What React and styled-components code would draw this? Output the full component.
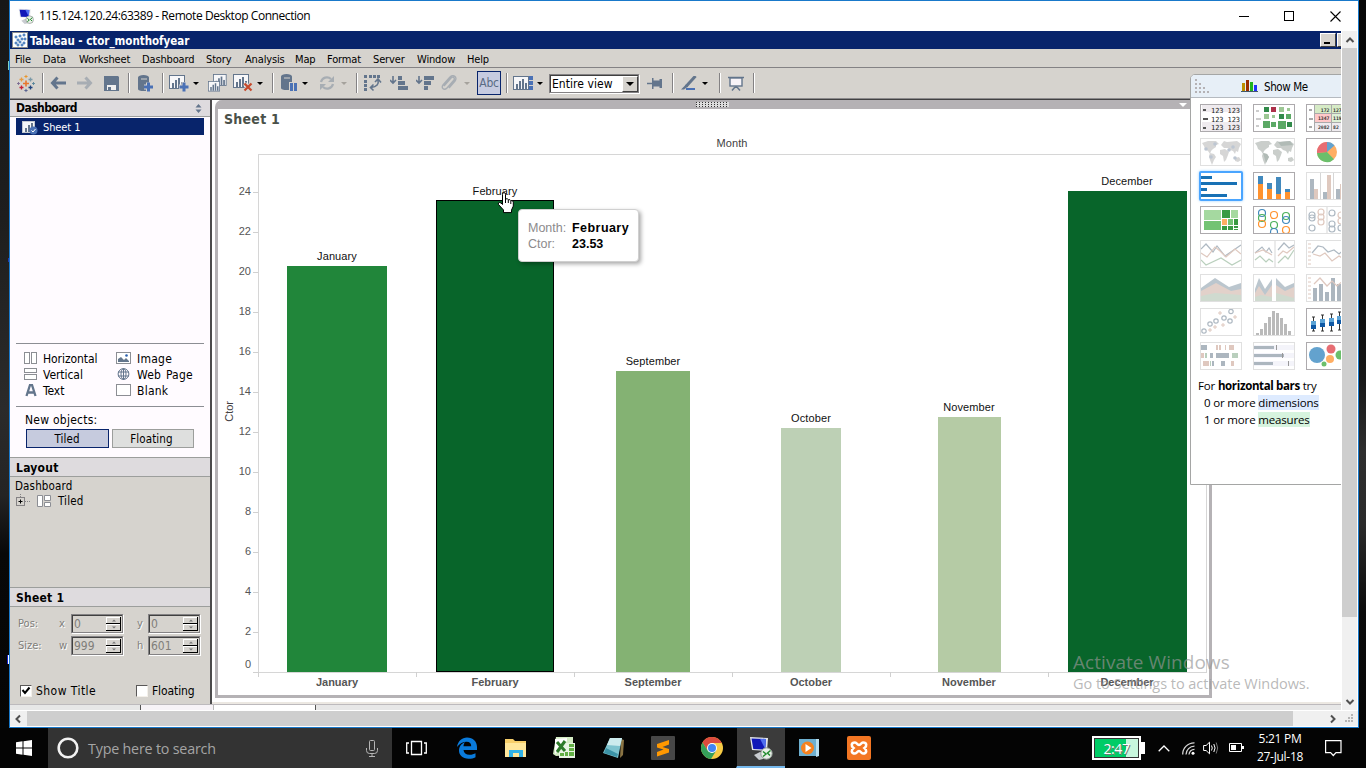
import React from "react";
import styled, { createGlobalStyle, css } from "styled-components";

const ui = '"DejaVu Sans Condensed", "DejaVu Sans", sans-serif';
const segoe = '"Open Sans", "Noto Sans", sans-serif';
const arial = '"Liberation Sans", Arial, sans-serif';

const c = {
  face: "#d6d3ce",
  navy: "#08246b",
  blue: "#1979ca",
  slate: "#63758c",
  steel: "#4a71b5",
  pale: "#fffbff",
  head: "#dedbde",
  line: "#8c8e94",
};

const Global = createGlobalStyle`
  * { box-sizing: border-box; }
  body { margin: 0; overflow: hidden; background: #000; }
  svg { display: block; flex: none; }
`;

/* ---------- desktop and remote window ---------- */
const Desktop = styled.div`
  position: relative;
  width: 1366px;
  height: 768px;
  display: flex;
  flex-direction: column;
  overflow: hidden;
  background: #060606;
  font: 11px/14px ${ui};
  color: #000;
  white-space: nowrap;
`;
const Upper = styled.div`
  display: flex;
  height: 728px;
`;
const Wallpaper = styled.div`
  width: ${(p) => p.$w}px;
  background: ${(p) =>
    p.$left
      ? "linear-gradient(#7fd1c4,#7fd1c4) 8px 61px/1px 9px no-repeat, linear-gradient(#2038b0,#2038b0) 8px 258px/1px 4px no-repeat, linear-gradient(90deg,#1523c8 1px,#fff 1px) 7px 655px/2px 9px no-repeat, linear-gradient(#171717,#1e1e1e 30%,#2b2b2b 56%,#242424 68%,#080808 76%,#050505)"
      : "linear-gradient(#070707,#0a0a0a 40%,#171717 52%,#2e2e2e 62%,#2b2b2b 72%,#0b0b0b 84%,#050505)"};
`;
const RemoteWindow = styled.div`
  width: 1350px;
  border: 1px solid ${c.blue};
  background: #fff;
  display: flex;
  flex-direction: column;
`;
const RemoteTitle = styled.div`
  height: 30px;
  display: flex;
  align-items: center;
  padding-left: 8px;
  font: 12px/16px ${segoe};
  letter-spacing: -0.44px;
  & > span { margin-left: 5px; flex: 1; }
`;
const WindowGlyph = styled.svg`
  margin-right: ${(p) => p.$mr}px;
`;
const RemoteBody = styled.div`
  display: flex;
  height: 679px;
`;
const Client = styled.div`
  width: 1331px;
  position: relative;
  display: flex;
  flex-direction: column;
  overflow: hidden;
`;
const VScroll = styled.div`
  width: 17px;
  height: 696px;
  padding: 0 1px;
  display: flex;
  flex-direction: column;
  background: #fff;
`;
const ScrollEnd = styled.div`
  width: ${(p) => p.$w}px;
  height: ${(p) => p.$h}px;
  background: #f0f0f0;
  display: flex;
  align-items: center;
  justify-content: center;
  flex: ${(p) => (p.$grow ? 1 : "none")};
  ${(p) => p.$toEnd && css`align-items: flex-end; padding-bottom: 20px;`}
  ${(p) => p.$toRight && css`justify-content: flex-end; padding-right: 3px;`}
`;
const VThumb = styled.div`
  height: 569px;
  background: #cecece;
`;
const HScroll = styled.div`
  height: 17px;
  padding: 1px 0;
  display: flex;
  background: #fff;
`;
const HThumb = styled.div`
  width: 1266px;
  background: #cecece;
`;

/* ---------- application chrome ---------- */
const AppTitle = styled.div`
  height: 18px;
  background: ${c.navy};
  color: #fff;
  display: flex;
  align-items: center;
  padding: 0 0 0 2px;
  font-weight: bold;
  font-size: 11.5px;
  & > span { margin-left: 2px; flex: 1; letter-spacing: -0.02px; padding-top: 1px; }
`;
const CaptionButton = styled.div`
  width: ${(p) => p.$w}px;
  height: 14px;
  background: ${c.face};
  border: 1px solid #fff;
  border-right: ${(p) => (p.$w > 4 ? "1px solid #404040" : 0)};
  border-bottom-color: #404040;
  margin-left: ${(p) => (p.$w > 4 ? 0 : 1)}px;
  padding: 8px 0 0 3px;
  &::after {
    content: "";
    display: ${(p) => (p.$w > 4 ? "block" : "none")};
    width: 6px;
    height: 2px;
    background: #000;
  }
`;
const MenuBar = styled.div`
  height: 19px;
  background: ${c.face};
  border-bottom: 1px solid #848284;
  display: flex;
  align-items: center;
  padding: 3px 0 0 5px;
`;
const MenuItem = styled.span`
  width: ${(p) => p.$w}px;
  letter-spacing: -0.15px;
`;
const Toolbar = styled.div`
  height: 32px;
  background: ${c.face};
  border-bottom: 1px solid #424142;
  box-shadow: inset 0 -1px #8c8a8c;
  padding-bottom: 1px;
  display: flex;
  align-items: center;
`;
const Tool = styled.svg`
  margin-left: ${(p) => p.$ml}px;
  opacity: ${(p) => (p.$dim ? 0.4 : 1)};
`;
const Divider = styled.div`
  width: 2px;
  height: 20px;
  margin-left: ${(p) => p.$ml}px;
  background: #848284;
  border-right: 1px solid #fff;
`;
const Caret = styled.i`
  margin-left: ${(p) => p.$ml}px;
  border: 3px solid transparent;
  border-top-color: ${(p) => (p.$dim ? "#a5a29c" : "#000")};
  border-bottom: 0;
`;
const AbcButton = styled.div`
  width: 24px;
  height: 24px;
  margin-left: 7px;
  border: 1px solid ${c.navy};
  background: #c6cbe0;
  color: #5a6b84;
  text-align: center;
  font: 12px/22px ${ui};
  letter-spacing: -0.3px;
`;
const ViewSelect = styled.div`
  width: 90px;
  height: 19px;
  margin-left: 6px;
  border: 1px solid #848284;
  box-shadow: inset 1px 1px #404040, 1px 1px #fff;
  background: #fff;
  display: flex;
  justify-content: space-between;
  padding: 1px 0 0 2px;
  font-size: 12px;
  line-height: 17px;
  letter-spacing: 0.05px;
`;
const SelectArrow = styled.div`
  width: 16px;
  height: 16px;
  background: ${c.face};
  border: 1px solid #fff;
  border-right-color: #404040;
  border-bottom-color: #404040;
  display: flex;
  align-items: center;
  justify-content: center;
  & > i {
    border: 4px solid transparent;
    border-top-color: #000;
    border-bottom: 0;
    margin: 0;
  }
`;
const Workspace = styled.div`
  height: 604px;
  display: flex;
`;
const TabStrip = styled.div`
  height: 6px;
  display: flex;
  border-top: 1px solid #bdbabd;
  background: #e7e7e7;
`;
const TabPiece = styled.div`
  width: ${(p) => p.$w}px;
  background: ${(p) => p.$bg};
  border-right: 1px solid ${(p) => p.$edge};
`;

/* ---------- sidebar ---------- */
const Sidebar = styled.div`
  width: 202px;
  background: ${c.face};
  border-right: 2px solid #4c4b4c;
  display: flex;
  flex-direction: column;
`;
const PanelHead = styled.div`
  height: ${(p) => p.$h}px;
  background: ${c.head};
  border: 1px solid #9c9e9c;
  border-width: ${(p) => (p.$first ? 0 : 1)}px 0 1px;
  padding: ${(p) => (p.$first ? 0 : 1)}px 8px 0 6px;
  display: flex;
  align-items: center;
  justify-content: space-between;
  font-weight: bold;
  font-size: 12px;
  letter-spacing: ${(p) => (p.$first ? -0.55 : 0.25)}px;
`;
const SheetList = styled.div`
  height: 226px;
  padding: 1px 6px 0;
  background: ${c.pale};
`;
const SheetRow = styled.div`
  height: 17px;
  background: ${c.navy};
  color: #fff;
  display: flex;
  align-items: center;
  padding-left: 6px;
  gap: 4px;
  padding-top: 2px;
  letter-spacing: -0.1px;
`;
const ObjectArea = styled.div`
  height: 114px;
  background: ${c.pale};
  padding: 0 6px;
`;
const ObjectGrid = styled.div`
  height: 64px;
  border: solid ${c.line};
  border-width: 1px 0;
  padding: 6px 0 0 7px;
  display: grid;
  grid-template-columns: 93px 90px;
  grid-auto-rows: 16px;
`;
const ObjectItem = styled.div`
  display: flex;
  align-items: center;
  gap: 5px;
  font-size: 12px;
  letter-spacing: -0.06px;
  word-spacing: 1px;
  & > span { padding: 1px 0 0 ${(p) => (p.$right ? 1 : 0)}px; letter-spacing: ${(p) => (p.$right ? 0.25 : -0.06)}px; }
`;
const NewLabel = styled.div`
  padding: 6px 0 0 9px;
  height: 22px;
  font-size: 12px;
  letter-spacing: 0.25px;
`;
const ToggleRow = styled.div`
  display: flex;
  gap: 3px;
  padding-left: 10px;
`;
const Toggle = styled.div`
  width: ${(p) => (p.$on ? 83 : 82)}px;
  height: 19px;
  border: 1px solid ${(p) => (p.$on ? c.navy : "#9c9e9c")};
  background: ${(p) => (p.$on ? "#c6cbde" : "#dedfde")};
  text-align: center;
  font-size: 11.5px;
  line-height: 18px;
  letter-spacing: 0.1px;
  padding-right: ${(p) => (p.$on ? 1 : 3)}px;
`;
const LayoutTree = styled.div`
  height: 110px;
  padding: 2px 0 0 5px;
  font-size: 11.5px;
  letter-spacing: 0.15px;
`;
const TreeRow = styled.div`
  display: flex;
  align-items: center;
  gap: 5px;
  margin-top: 1px;
  & > span { padding-left: 1px; }
`;
const Props = styled.div`
  padding: 5px 0 0 8px;
`;
const PropRow = styled.div`
  display: flex;
  align-items: center;
  height: 22px;
  color: #807e7a;
  text-shadow: 1px 1px #fff;
`;
const PropLabel = styled.span`
  width: ${(p) => p.$w}px;
  padding-left: ${(p) => p.$pl || 0}px;
  padding-top: 1px;
`;
const Spin = styled.div`
  width: 52px;
  height: 19px;
  border: 1px solid #848284;
  box-shadow: inset 1px 1px #404040, 1px 1px #fff;
  display: flex;
  justify-content: space-between;
  padding: 2px 1px 1px 2px;
  font-size: 12px;
  line-height: 15px;
  text-shadow: none;
`;
const CheckRow = styled.div`
  display: flex;
  align-items: center;
  margin-top: 28px;
  padding-left: 2px;
  font-size: 12px;
`;
const Check = styled.div`
  width: 12px;
  height: 12px;
  border: 1px solid #5a5858;
  border-right-color: #f4f0ea;
  border-bottom-color: #f4f0ea;
  background: #fff;
`;
const CheckText = styled.span`
  width: ${(p) => p.$w}px;
  padding-left: 4px;
  letter-spacing: ${(p) => p.$ls}px;
`;

/* ---------- chart ---------- */
const Stage = styled.div`
  flex: 1;
  background: #fff;
  border-bottom: 2px solid #ece8e2;
  padding-left: 3px;
`;
const SheetFrame = styled.div`
  width: 997px;
  height: 598px;
  border: 3px solid #b5b2b5;
  border-top: 0;
  border-radius: 7px 7px 0 0;
`;
const FrameGrip = styled.div`
  height: 9px;
  background: #b5b2b5;
  border-radius: 4px 0 0 0;
  display: flex;
  align-items: center;
  padding-left: 478px;
  & > i {
    margin-left: 450px;
    border: 4px solid transparent;
    border-top-color: #fff;
    border-bottom: 0;
  }
`;
const Grip = styled.div`
  width: 33px;
  height: 5px;
  background:
    conic-gradient(from 0deg at 1px 1px, transparent 75%, #333 0) 0 0/3px 2px,
    #ddd;
`;
const SheetTitle = styled.div`
  height: 22px;
  padding: 2px 0 0 6px;
  font: bold 14px/16px ${ui};
  letter-spacing: 0.25px;
  color: #4a514a;
`;
const ColumnTitle = styled.div`
  height: 23px;
  padding: 5px 0 0 40px;
  width: 988px;
  text-align: center;
  font: 11px/14px ${arial};
  letter-spacing: 0.1px;
  color: #424142;
`;
const PlotRow = styled.div`
  display: flex;
  height: 518px;
`;
const AxisTitle = styled.div`
  width: 16px;
  padding-left: 4px;
  display: flex;
  align-items: center;
  & > span {
    writing-mode: vertical-rl;
    transform: rotate(180deg);
    font: 11px/14px ${arial};
    color: #424142;
    margin-top: -4px;
  }
`;
const AxisScale = styled.div`
  width: 24px;
  padding-top: 18px;
  display: flex;
  flex-direction: column;
`;
const Tick = styled.div`
  height: 40px;
  flex: none;
  display: flex;
  justify-content: flex-end;
  gap: 2px;
  font: 11px/14px ${arial};
  color: #555;
  & > span { margin-top: ${(p) => (p.$zero ? 5 : 12)}px; }
  &::after {
    content: "";
    width: 5px;
    height: 1px;
    margin-top: 20px;
    background: #d0d0d0;
  }
`;
const Plot = styled.div`
  width: 949px;
  box-shadow: inset 0 0 0 1px #d6d6d6;
  padding-bottom: 1px;
  display: flex;
  height: 519px;
`;
const BarCell = styled.div`
  width: 158px;
  flex: none;
  display: flex;
  flex-direction: column;
  justify-content: flex-end;
  align-items: center;
  font: 11px/14px ${arial};
  letter-spacing: 0.1px;
  color: #111;
`;
const Bar = styled.div`
  margin-top: ${(p) => (p.$hot ? 2 : 3)}px;
  flex: none;
  background: ${(p) => p.$fill};
  border: ${(p) => (p.$hot ? "1px solid #000" : 0)};
`;
const Categories = styled.div`
  display: flex;
  padding-left: 40px;
`;
const Category = styled.div`
  width: 158px;
  height: 22px;
  text-align: center;
  font: bold 11px/21px ${arial};
  color: #555;
  background: linear-gradient(#d0d0d0, #d0d0d0) 0 0/1px 5px no-repeat;
`;
const Tooltip = styled.div`
  position: absolute;
  left: 508px;
  top: 178px;
  width: 121px;
  height: 53px;
  border: 1px solid #d0d0d0;
  border-radius: 4px;
  background: #fff;
  box-shadow: 2px 2px 4px rgba(0, 0, 0, 0.35);
  padding: 10px 0 0 9px;
  display: grid;
  grid-template-columns: 44px auto;
  grid-auto-rows: 16px;
  font: 12.5px/16px ${arial};
  color: #8c8a8c;
  & > b { color: #000; }
  & > b:nth-of-type(1) { letter-spacing: 0.45px; }
`;
const Pointer = styled.svg`
  position: absolute;
  left: 487px;
  top: 161px;
`;

/* ---------- show me ---------- */
const ShowMe = styled.div`
  position: absolute;
  left: 1180px;
  top: 43px;
  width: 170px;
  height: 411px;
  border: 1px solid #a5a6a5;
  border-radius: 5px 0 0 0;
  background: #fff;
  overflow: hidden;
`;
const ShowMeHead = styled.div`
  height: 23px;
  background: #e7eff7;
  border-bottom: 1px solid #b5bac0;
  display: flex;
  align-items: center;
  padding-left: 4px;
  font-size: 11.5px;
  & > span { margin-left: 6px; letter-spacing: -0.4px; padding-top: 2px;}
`;
const ThumbGrid = styled.div`
  display: grid;
  grid-template-columns: repeat(3, 42px);
  gap: 6px 11px;
  padding: 6px 0 0 9px;
`;
const Thumb = styled.div`
  width: 42px;
  height: 28px;
  border: 1px solid ${(p) => (p.$dim ? "#e0e0e0" : "#adaaad")};
  background: #fff;
  overflow: hidden;
  & > svg { opacity: ${(p) => (p.$dim ? 0.4 : 1)}; }
  ${(p) =>
    p.$on &&
    css`
      border: 2px solid #4aa5ff;
      border-radius: 2px;
      width: 44px;
      height: 30px;
      margin: -1px;
      box-shadow: 0 0 3px #9cd0ff;
    `}
`;
const Hint = styled.div`
  padding: 7px 0 0 7px;
  font: 11.5px/17px ${segoe};
  letter-spacing: -0.16px;
  & > div { padding-left: 6px; }
  & b { letter-spacing: -0.36px; }
`;
const Pill = styled.span`
  background: ${(p) => p.$bg};
`;
const Watermark = styled.div`
  position: absolute;
  left: 1073px;
  top: 651px;
  color: rgba(150, 150, 150, 0.68);
  font: 14.5px/20px ${segoe};
  letter-spacing: -0.03px;
  & > div:first-child { font-size: 19px; line-height: 23px; letter-spacing: 0.05px; }
`;

/* ---------- taskbar ---------- */
const Taskbar = styled.div`
  height: 40px;
  display: flex;
  background: #040404;
  color: #fff;
`;
const Start = styled.div`
  width: 48px;
  display: flex;
  align-items: center;
  justify-content: center;
`;
const Search = styled.div`
  width: 344px;
  background: #333;
  display: flex;
  align-items: center;
  padding: 0 14px 0 9px;
  color: #a5a5a5;
  font: 14.3px/20px ${segoe};
  letter-spacing: -0.2px;
  & > span { margin-left: 9px; flex: 1; padding-top: 1px; }
`;
const Task = styled.div`
  width: ${(p) => p.$w || 49}px;
  display: flex;
  align-items: center;
  justify-content: center;
  padding-right: ${(p) => p.$pr || 0}px;
  ${(p) =>
    p.$on &&
    css`
      background: #3b3b3b;
      border-bottom: 2px solid #76b9ed;
      border-left: 1px solid #040404;
      padding-top: 2px;
    `}
`;
const Tray = styled.div`
  flex: 1;
  display: flex;
  align-items: center;
  justify-content: flex-end;
  padding-right: 24px;
`;
const TrayIcon = styled.svg`
  margin-right: ${(p) => p.$mr}px;
`;
const BatteryGauge = styled.div`
  width: 49px;
  height: 24px;
  border: 2px solid #fff;
  outline: 1px solid #333;
  outline-offset: -3px;
  background: linear-gradient(90deg, #0c6 32px, #c8f7dd 32px);
  color: #fff;
  font: 14px/21px ${segoe};
  text-align: center;
  letter-spacing: -0.4px;
  text-shadow: 1px 1px #777;
`;
const BatteryNub = styled.div`
  width: 4px;
  height: 12px;
  background: #fff;
  margin-right: 13px;
`;
const Clock = styled.div`
  width: 54px;
  text-align: center;
  font: 12px/18px ${segoe};
  letter-spacing: -0.3px;
  margin-right: 18px;
`;

/* ---------- data ---------- */
const bars = [
  { m: "January", w: 100, h: 406, fill: "#21863a" },
  { m: "February", w: 118, h: 472, fill: "#08652a", hot: true },
  { m: "September", w: 74, h: 301, fill: "#84b273" },
  { m: "October", w: 60, h: 244, fill: "#bdd0b5" },
  { m: "November", w: 63, h: 255, fill: "#b5cba5" },
  { m: "December", w: 119, h: 481, fill: "#08652a" },
];
const ticks = [24, 22, 20, 18, 16, 14, 12, 10, 8, 6, 4, 2];
const menus = [
  ["File", 28], ["Data", 36], ["Worksheet", 63], ["Dashboard", 64], ["Story", 39], ["Analysis", 50],
  ["Map", 32], ["Format", 46], ["Server", 44], ["Window", 50], ["Help", 40],
];

/* ---------- icons ---------- */
const R = ({ d, f = c.slate }) =>
  d.map(([x, y, w, h, fill], i) => <rect key={i} x={x} y={y} width={w} height={h} fill={fill || f} />);
const Circles = ({ d, r = 3.5 }) =>
  d.map(([x, y, s], i) => <circle key={i} cx={x} cy={y} r={r} fill="none" stroke={s} strokeWidth="1.2" />);
const Line = ({ p, s, w = 1.2 }) => <polyline points={p} fill="none" stroke={s} strokeWidth={w} />;
const Plus = ({ x, y, r = 2, s, w = 1 }) => (
  <path d={`M${x - r} ${y}h${2 * r}M${x} ${y - r}v${2 * r}`} stroke={s} strokeWidth={w} fill="none" />
);

const RemoteIcon = ({ size }) => (
  <svg width={size} height={size} viewBox="0 0 24 24">
    <path d="M5 19l6-3 6 1 1 5-8 2z" fill="#c9ccd0" />
    <path d="M1 1l18 1-1 13L3 14z" fill="#e3e6ea" />
    <path d="M2.500 2.500L17 3l-.800 10.500L4.300 13z" fill="#1018b8" />
    <path d="M11 2.800l6 .2-.800 10z" fill="#4f6ff0" />
    <circle cx="17.500" cy="17.500" r="5.700" fill="#e9efe8" stroke="#8c9690" />
    <path d="M14 15.500l3 2.500-3 2.500M21.500 14.500l-3 2.500 2.500 2.500" stroke="#208a2c" strokeWidth="1.500" fill="none" />
  </svg>
);
const SheetIcon = () => (
  <svg width="17" height="14">
    <rect x=".5" y=".5" width="12" height="11" fill="#f4f6f8" stroke="#c2c8d0" />
    <R d={[[3, 7, 2, 4], [6, 4, 2, 7], [9, 2, 2, 9]]} />
    <circle cx="11.500" cy="9.500" r="4" fill={c.steel} />
    <path d="M9.500 9.500l1.500 1.500 2.500-3" stroke="#fff" fill="none" />
  </svg>
);
const LogoIcon = () => (
  <Tool $ml={7} width="18" height="19">
    <Plus x={9} y={9.5} r={3} s="#e8762c" w={1.6} />
    <Plus x={4.500} y={5.500} r={2} s="#e89b41" w={1.3} />
    <Plus x={13.500} y={5.500} r={2} s="#7b9aa8" w={1.3} />
    <Plus x={4.500} y={13.500} r={2} s="#c72035" w={1.3} />
    <Plus x={13.500} y={13.500} r={2} s="#1f447e" w={1.3} />
    <Plus x={9} y={2.500} r={1.6} s="#e8962c" />
    <Plus x={9} y={16.500} r={1.6} s="#5b6591" />
    <Plus x={1.500} y={9.500} r={1.400} s="#7c6c92" />
    <Plus x={16.500} y={9.500} r={1.400} s="#59879b" />
  </Tool>
);
const Cylinder = () => (
  <path d="M0 2.500C0 1 2.500 0 5.500 0S11 1 11 2.500V14c0 1.500-2.500 2-5.500 2S0 15.500 0 14zM0 4.500h4" fill={c.slate} />
);
const MiniChart = ({ x = 0, y = 0 }) => (
  <g transform={`translate(${x} ${y})`}>
    <rect x=".5" y=".5" width="15" height="13" fill="#f7f7f9" stroke={c.slate} />
    <R d={[[3, 8, 2, 5], [6, 5, 2, 8], [9, 3, 2, 10], [12, 7, 2, 6]]} />
  </g>
);

const AppToolbar = () => (
  <Toolbar>
    <LogoIcon />
    <Divider $ml={7} />
    <Tool $ml={6} width="16" height="14"><path d="M2 7h14M7.500 1.500L2.500 7l5 5.500" stroke={c.slate} strokeWidth="3" fill="none" /></Tool>
    <Tool $ml={11} $dim width="16" height="14"><path d="M0 7h14M8.500 1.500l5 5.500-5 5.500" stroke={c.slate} strokeWidth="3" fill="none" /></Tool>
    <Tool $ml={11} width="15" height="15"><path d="M0 0h14l1 1v14H0z" fill={c.slate} /><R d={[[3, 9, 9, 5, "#f0f0f0"], [4, 11, 3, 3]]} /></Tool>
    <Divider $ml={9} />
    <Tool $ml={8} width="16" height="17">
      <Cylinder /><path d="M3 4h6" stroke={c.face} />
      <path d="M6 12h9M10.500 7.500v9" stroke={c.face} strokeWidth="5" /><path d="M6 12h9M10.500 7.500v9" stroke={c.steel} strokeWidth="3" />
    </Tool>
    <Divider $ml={8} />
    <Tool $ml={5} width="21" height="17">
      <MiniChart />
      <path d="M10 12h10M15 7v10" stroke={c.face} strokeWidth="5" /><path d="M10.500 12h9M15 7.500v9" stroke={c.steel} strokeWidth="3" />
    </Tool>
    <Caret $ml={3} />
    <Tool $ml={9} width="19" height="18">
      <g transform="translate(5 0) scale(.85)"><MiniChart /></g>
      <g transform="translate(0 7) scale(.75)"><MiniChart /></g>
    </Tool>
    <Tool $ml={6} width="20" height="18">
      <MiniChart /><path d="M11.500 9.500l7 7M18.500 9.500l-7 7" stroke={c.face} strokeWidth="4" />
      <path d="M11.500 9.500l7 7M18.500 9.500l-7 7" stroke="#c6492c" strokeWidth="2.200" />
    </Tool>
    <Caret $ml={4} />
    <Divider $ml={9} />
    <Tool $ml={7} width="17" height="18"><Cylinder /><path d="M3 4h6" stroke={c.face} /><R f={c.steel} d={[[8, 8, 9, 10, c.face], [9, 9, 3, 8], [13, 9, 3, 8]]} /></Tool>
    <Caret $ml={4} />
    <Tool $ml={11} $dim width="16" height="14">
      <path d="M2 6a6 6 0 0 1 10-3M14 8a6 6 0 0 1-10 3" stroke={c.slate} strokeWidth="2.200" fill="none" /><path d="M15 0v6H9zM1 14V8h6z" fill={c.slate} />
    </Tool>
    <Caret $ml={6} $dim />
    <Divider $ml={9} />
    <Tool $ml={6} width="18" height="17">
      <R d={[[0, 0, 3, 3], [5, 0, 3, 3], [9, 0, 3, 3], [13, 0, 3, 3], [0, 5, 3, 3], [0, 9, 3, 3], [0, 13, 3, 3]]} />
      <path d="M14 5c1 4-1 7-7 7.500M11 7l3-3 3 3.500M9.500 9.500L6.500 12.500l3 3" stroke={c.slate} strokeWidth="1.600" fill="none" />
    </Tool>
    <Tool $ml={8} width="18" height="15">
      <path d="M3 0v6M0 4l3 3 3-3" stroke={c.slate} strokeWidth="1.600" fill="none" /><R d={[[8, 0, 4, 4], [8, 5, 7, 4], [8, 10, 10, 4]]} />
    </Tool>
    <Tool $ml={8} width="18" height="15">
      <path d="M3 0v6M0 4l3 3 3-3" stroke={c.slate} strokeWidth="1.600" fill="none" /><R d={[[8, 0, 10, 4], [8, 5, 7, 4], [8, 10, 4, 4]]} />
    </Tool>
    <Tool $ml={7} $dim width="17" height="16">
      <path d="M3 11l7-8c2-2 4 0 3 2l-7 8c-3 3-6 0-4-3l7-8c3-3 8 0 5 4l-6 7" stroke={c.slate} strokeWidth="1.400" fill="none" />
    </Tool>
    <Caret $ml={6} $dim />
    <AbcButton>Abc</AbcButton>
    <Divider $ml={5} />
    <Tool $ml={5} width="20" height="14"><MiniChart /><R f={c.steel} d={[[16, 0, 4, 4], [16, 5, 4, 4], [16, 10, 4, 4]]} /></Tool>
    <Caret $ml={4} />
    <ViewSelect>Entire view<SelectArrow><i /></SelectArrow></ViewSelect>
    <Tool $ml={8} width="16" height="11"><path d="M0 5.500h6" stroke={c.slate} strokeWidth="1.500" /><path d="M5 0h1.500v2.500h6V1H15v9h-2.500V8.500h-6V11H5z" fill={c.slate} /></Tool>
    <Divider $ml={9} />
    <Tool $ml={7} width="16" height="15"><path d="M14.500 0L5 10.500" stroke={c.slate} strokeWidth="3" fill="none" /><path d="M5 8.500l2 2-4 3H0z" fill={c.slate} /><rect x="5" y="12" width="9" height="2" fill={c.steel} /></Tool>
    <Caret $ml={5} />
    <Divider $ml={11} />
    <Tool $ml={7} width="16" height="15">
      <path d="M0 1.500h16" stroke={c.slate} strokeWidth="1.500" /><rect x="2" y="2" width="12" height="8" fill="#f7f3f7" stroke={c.slate} strokeWidth="1.400" />
      <path d="M8 10v2M4 14.500L7 11M12 14.500L9 11" stroke={c.slate} strokeWidth="1.500" />
    </Tool>
    <Divider $ml={9} />
  </Toolbar>
);

const objectIcons = {
  Horizontal: <><rect x="1.500" y=".5" width="5" height="11" fill="#fff" stroke={c.line} /><rect x="8.500" y=".5" width="5" height="11" fill="#fff" stroke={c.line} /></>,
  Image: <><rect x=".5" y=".5" width="14" height="11" fill="#fff" stroke={c.line} /><path d="M2 10V7l3-2 3 3 2-2 3 3v1z" fill={c.slate} /><circle cx="10.500" cy="3.500" r="1.300" fill="#2c5fae" /></>,
  Vertical: <><rect x="1.500" y=".5" width="12" height="4" fill="#fff" stroke={c.line} /><rect x="1.500" y="6.500" width="12" height="5" fill="#fff" stroke={c.line} /></>,
  "Web Page": <g stroke={c.slate} fill="none"><circle cx="7.500" cy="6" r="5.400" /><ellipse cx="7.500" cy="6" rx="2.500" ry="5.400" /><path d="M2 4h11M2 8h11M7.500 .6v11" /></g>,
  Text: <path d="M3.500 12L7 1h2l3.500 11M5 8.500h6" stroke={c.slate} strokeWidth="2.300" fill="none" />,
  Blank: <rect x=".5" y=".5" width="14" height="11" fill="#fff" stroke={c.line} />,
};

/* thumbnails of the chart types */
const g1 = "#5ba965", g2 = "#318a4a", g3 = "#9cc794";
const bl = "#4289bd", og = "#ff922e", gr = "#4cb15c";
const nv = "#365068", bn = "#b07860", gn = "#538a5c", gy = "#334c62";
const land = "M1 4l6-2 8 0 3 3-3 1 0 2-3 2-2 2-1 3-2-3-3-2-1-3zM9 14l4 1 2 3-2 3-2 5-2-5-1-4zM20 6l3-4 3 1 10-1 4 3-2 4-1 4-2-1-1 3-2-3-3-1-2-2-4 0zM19 11l5-1 4 3-1 3-2 5-2 2-1-6-3-2zM34 19l4-1 2 3-3 2-3-1z";
const Cells = () => (
  <>
    <R d={[[1, 0, 39, 7, "#efebef"], [1, 17, 39, 9, "#efebef"], [2, 4, 3, 2, "#555"], [2, 13, 5, 2, "#555"], [2, 22, 3, 2, "#555"]]} />
    {[7.5, 16.5, 24.5].map((y) => (
      <text key={y} x="10" y={y} fontSize="7" fontFamily="DejaVu Sans Mono" fill="#222" textLength="29">123 123</text>
    ))}
  </>
);
const thumbs = [
  { a: <Cells /> },
  { a: <R d={[[2, 5, 3, 2, "#ccc"], [2, 13, 5, 2, "#ccc"], [2, 20, 3, 2, "#ccc"], [10, 2, 5, 5, g2], [17, 2, 5, 5, "#ad304a"], [25, 2, 5, 5, g3], [33, 3, 3, 3, g3], [10, 9, 5, 5, g3], [18, 10, 3, 3, g3], [25, 9, 5, 5, g2], [32, 9, 5, 5, g1], [9, 16, 7, 7, g1], [17, 17, 5, 5, g1], [24, 16, 8, 8, g1], [33, 17, 5, 5, g2]]} /> },
  { a: <><R d={[[8, 0, 33, 9, "#d6ebc6"], [8, 9, 16, 8, "#ffc8c8"], [25, 9, 16, 8, "#dff0d6"], [8, 17, 33, 9, "#efebef"], [7, 0, 1, 26, "#aaa"], [24, 0, 1, 26, "#aaa"], [8, 8, 33, 1, "#aaa"], [8, 17, 33, 1, "#aaa"], [2, 4, 3, 2, "#aaa"], [2, 13, 4, 2, "#aaa"], [2, 21, 3, 2, "#aaa"]]} />
    {[["172", "127", 6.5], ["1347", "119", 15.2], ["2082", "82", 24]].map(([t, u, y]) => (
      <g key={t} fontSize="4.800" fontWeight="bold" fontFamily="DejaVu Sans Mono" fill="#333">
        <text x="22.500" y={y} textAnchor="end">{t}</text>
        <text x="26" y={y}>{u}</text>
      </g>
    ))}</> },
  { dim: 1, a: <><path d={land} fill="#999" />{[[5, 10], [10, 18], [14, 5], [28, 11], [32, 8], [34, 19]].map(([x, y]) => <circle key={`${x}${y}`} cx={x} cy={y} r="1.800" fill="#5a7090" />)}</> },
  { dim: 1, a: <><path d={land} fill="#7a857e" /><path d="M24 3l12-1 3 4-12 1zM9 14l4 1 2 3-3 6z" fill="#3c554a" /></> },
  { a: <g transform="translate(20 13)"><circle r="10" fill="#ffae63" /><path d="M0 0V-10A10 10 0 0 1 7.500 -6.600z" fill="#63a2ce" /><path d="M0 0L7 7.200A10 10 0 0 1-10 1z" fill="#6bbf6b" /><path d="M0 0L-10 1A10 10 0 0 1 0-10z" fill="#e76d73" /></g> },
  { on: 1, a: <R f="#1871b5" d={[[0, 3, 11, 3], [0, 9, 36, 3], [0, 15, 6, 3], [0, 21, 26, 3]]} /> },
  { a: <R f={og} d={[[4, 3, 5, 8, bl], [4, 11, 5, 15], [13, 10, 5, 6, bl], [13, 16, 5, 10], [22, 4, 5, 17, bl], [22, 21, 5, 5], [31, 16, 5, 3, bl], [31, 19, 5, 7]]} /> },
  { dim: 1, a: <R f={gy} d={[[3, 6, 4, 20], [7, 16, 4, 10, bn], [13, 0, 1, 26, "#999"], [16, 19, 4, 7], [20, 2, 4, 24, bn], [26, 0, 1, 26, "#999"], [29, 16, 4, 10], [33, 11, 4, 15, bn]]} /> },
  { a: <R f="#73c373" d={[[3, 3, 17, 10, "#a5d9a0"], [3, 14, 17, 9], [21, 3, 8, 8, "#399a42"], [30, 3, 7, 8, "#a5d9a0"], [21, 12, 5, 6, "#ffae63"], [27, 12, 5, 6], [33, 12, 4, 6, "#399a42"], [21, 19, 5, 4, "#399a42"], [27, 19, 5, 4, "#399a42"], [33, 19, 4, 2, "#399a42"], [33, 22, 4, 1, "#399a42"]]} /> },
  { a: <Circles d={[[8, 6, bl], [8, 11, gr], [8, 17, og], [20, 8, og], [20, 18, gr], [20, 25, bl], [32, 9, gr], [32, 13, bl], [32, 23, og]]} /> },
  { dim: 1, a: <><Circles r={3} d={[[5, 8, nv], [5, 11, nv], [5, 21, nv], [14, 5, bn], [14, 10, bn], [14, 15, bn], [25, 6, nv], [25, 17, nv], [25, 22, nv], [34, 8, bn], [34, 14, bn], [34, 21, nv]]} /><path d="M20 0v26" stroke="#999" /></> },
  { dim: 1, a: <><Line p="0,8 5,3 12,11 16,5 24,15 40,4" s={nv} /><Line p="0,12 6,16 14,6 19,10 25,16 34,8 40,13" s={bn} /><Line p="0,19 5,24 20,17 31,24 40,19" s={gn} /></> },
  { dim: 1, a: <><Line p="1,12 8,6 12,11 15,7 18,12" s={nv} /><Line p="1,12 9,9 18,14" s={bn} /><Line p="1,19 6,15 12,21 15,18 19,21" s={gn} /><Line p="24,9 30,2 35,7 40,4" s={nv} /><Line p="24,15 29,10 33,12 40,6" s={bn} /><Line p="24,22 31,15 34,18 40,9" s={gn} /><path d="M21 0v26" stroke="#999" /></> },
  { dim: 1, a: <><Line p="5,12 11,5 16,6 21,11 27,9 32,13 40,6" s={nv} /><Line p="6,13 13,15 18,12 25,20 32,15 40,20" s={bn} />{[3, 7, 11, 15, 19, 23].map((y) => <path key={y} d={`M1 ${y}h3`} stroke={bn} />)}</> },
  { dim: 1, a: <><path d="M0 13L14 3l14 9 12-4v18H0z" fill="#577386" /><path d="M0 16L15 8l15 8 10-2v12H0z" fill="#b78d7c" /><path d="M0 21l14-3 26 2v6H0z" fill="#8aa58a" /></> },
  { dim: 1, a: <><path d="M1 14L5 3l6 11 7-10v22H1zM22 3l9 9 9-4v18H22z" fill="#577386" /><path d="M1 18l4-7 6 9 7-10v16H1zM22 10l9 6 9-4v14H22z" fill="#b78d7c" /><path d="M1 22l6-2 11 2v4H1zM22 18l18 5v3H22z" fill="#8aa58a" /><path d="M20 0v26" stroke="#fff" strokeWidth="2" /></> },
  { dim: 1, a: <><R f={gy} d={[[6, 13, 4, 13], [12, 9, 4, 17], [18, 17, 4, 9], [24, 3, 4, 23], [30, 9, 4, 17]]} /><Line p="7,9 13,3 20,11 25,6 30,11 38,4" s={bn} />{[3, 7, 11, 15, 19, 23].map((y) => <path key={y} d={`M1 ${y}h3`} stroke={bn} />)}</> },
  { dim: 1, a: <><Circles r={2.2} d={[[3, 22, nv], [9, 15, nv], [15, 12, nv], [23, 9, nv], [30, 2.5, nv], [29, 12, nv]]} />{[[9, 21], [14, 18], [19, 4], [22, 16], [34, 8]].map(([x, y]) => <Plus key={x} x={x} y={y} s={bn} />)}</> },
  { dim: 1, a: <R f="#555" d={[[2, 24, 3, 2], [6, 20, 3, 6], [10, 14, 3, 12], [14, 8, 3, 18], [18, 2, 3, 24], [22, 4, 3, 22], [26, 9, 3, 17], [30, 15, 3, 11], [34, 22, 3, 4]]} /> },
  { a: <>{[[6, 8, 22], [15, 6, 22], [24, 5, 22], [32, 3, 21]].map(([x, y, b]) => <g key={x}><path d={`M${x + 0.5} ${y}V${b}M${x - 1} ${y}h3M${x - 1} ${b}h3`} stroke="#333" /><R d={[[x - 2, y + 4, 5, 5, "#5ba3d6"], [x - 2, y + 8, 5, 4, "#1059a5"]]} /></g>)}</> },
  { dim: 1, a: <R f={gy} d={[[0, 2, 6, 5], [15, 2, 2, 5, bn], [18, 2, 2, 5, bn], [24, 2, 1, 5, bn], [28, 2, 5, 5, bn], [0, 10, 3, 5, bn], [4, 10, 2, 5, gn], [9, 10, 3, 5], [15, 10, 13, 5], [31, 10, 6, 5, gn], [2, 18, 6, 5, bn], [9, 18, 1, 5, gn], [11, 18, 2, 5], [20, 18, 4, 5], [30, 18, 3, 5, bn]]} /> },
  { dim: 1, a: <R f={gy} d={[[0, 2, 40, 5, "#e4e6f4"], [0, 10, 40, 5, "#e4e6f4"], [0, 18, 40, 5, "#e4e6f4"], [0, 3, 20, 3], [22, 2, 1, 5, "#000"], [0, 11, 30, 3], [28, 10, 1, 5, "#000"], [0, 19, 19, 3], [34, 18, 1, 5, "#000"]]} /> },
  { a: <><circle cx="10" cy="12" r="8" fill="#63a2ce" /><circle cx="24" cy="6" r="4.500" fill="#e76d73" /><circle cx="23" cy="16" r="4" fill="#ffae63" /><circle cx="33" cy="12" r="4.500" fill="#6bbf6b" /><circle cx="17" cy="21" r="2.500" fill="#6bbf6b" /></> },
];

const SpinArrows = () => (
  <svg width="15" height="14">
    <R d={[[0, 0, 14, 6, c.face], [0, 6, 15, 1, "#000"], [0, 8, 14, 5, c.face], [0, 13, 15, 1, "#000"], [0, 0, 14, 1, "#fff"], [0, 7, 14, 1, "#fff"], [0, 0, 1, 6, "#fff"], [0, 8, 1, 5, "#fff"], [14, 0, 1, 14, "#000"]]} />
    <path d="M6 4.500h4L8 2.500zM6 9.500h4l-2 2z" fill="#777" />
  </svg>
);
const PosRow = ({ label, items }) => (
  <PropRow>
    <PropLabel $w={41}>{label}</PropLabel>
    {items.map(([k, v], i) => (
      <React.Fragment key={k}>
        <PropLabel $w={i ? 25 : 12} $pl={i ? 14 : 0}>{k}</PropLabel>
        <Spin>{v}<SpinArrows /></Spin>
      </React.Fragment>
    ))}
  </PropRow>
);
const Chevron = ({ d }) => (
  <svg width="10" height="10" viewBox="0 0 10 10"><path d={d} stroke="#505050" strokeWidth="2" fill="none" /></svg>
);

const taskIcons = [
  <svg width="22" height="16"><path d="M5.500 1.500h10v13h-10zM3 3H.7v10H3M18 3h2.300v10H18" stroke="#fff" strokeWidth="1.300" fill="none" /></svg>,
  <svg width="22" height="22" viewBox="0 0 22 22"><path d="M1 10C2 4 6 .5 11 .5c6 0 10 4 10 9.500V13H7.500c.3 3 2.500 4.700 6 4.700 2.500 0 4.500-.7 6-1.500v4c-2 1-4 1.500-7 1.500C6.500 21.700 3 18 3 13.500c0-4 2.500-7 6-8.500-1 1.500-1.500 3-1.500 4.300h7.700c0-3-1.500-4.600-4.500-4.600C7 4.700 3.500 6.500 1 10z" fill="#0a7bdc" /></svg>,
  <svg width="22" height="20"><path d="M0 1h8l2 2h11v16H0z" fill="#f7cf6b" /><path d="M0 5h21v14H0z" fill="#ffe79c" /><path d="M4 19v-7h14v7h-4v-4H8v4z" fill="#31b2e7" /></svg>,
  <svg width="23" height="22"><path d="M3 0h17v18l-17 1L0 17z" fill="#d4ecc4" /><path d="M2 2l12-1v3L2 17z" fill="#fff" /><path d="M11 6h11v15H6v-5z" fill="#e8f4e4" /><R f="#62b045" d={[[16, 7, 5, 3], [16, 11, 5, 3], [16, 15, 5, 4], [12, 15, 3, 4], [7, 16, 4, 3]]} /><path d="M4 5l8 9M12 4L4 15" stroke="#2d7a2a" strokeWidth="3" /></svg>,
  <svg width="22" height="22"><path d="M18 2l3 1-1 15-3 3z" fill="#8a7444" /><path d="M7 1h12l-4 20L0 16z" fill="#7ec3cf" /><path d="M7 1h12l-2 8L4 8z" fill="#cdebee" /><path d="M3 11l12 6-1 3-13-4z" fill="#3c93a7" /></svg>,
  <svg width="24" height="24"><rect width="24" height="24" rx="1" fill="#474747" /><path d="M18 4v4.500L11.500 11l6.500 2v3.500L6 20.500V16l6.500-2.500L6 11.500V8z" fill="#ff9800" /></svg>,
  <svg width="22" height="22" viewBox="-11 -11 22 22"><circle r="11" fill="#f7cb45" /><path d="M0-5H9.800A11 11 0 0 0-9.500-5.500L-4.300 2.500z" fill="#dd4b3e" /><path d="M-9.500-5.500A11 11 0 0 0-1 11L4.300 2.500-4.300 2.500z" fill="#35a05a" /><circle r="5" fill="#fff" /><circle r="4" fill="#4285f4" /></svg>,
  <RemoteIcon size={24} />,
  <svg width="21" height="20"><path d="M3 1h17v17l-3 1V3z" fill="#b8dff0" /><rect x="0" y="1" width="17" height="17" fill="#6eb0d0" /><circle cx="8.500" cy="10" r="6.500" fill="#f58220" /><path d="M6.500 6l6 4-6 4z" fill="#fff" /></svg>,
  <svg width="24" height="24"><rect width="24" height="24" rx="2" fill="#f37623" /><path d="M8 6.500C10 6.500 10 9 12 9S14 6.500 16 6.500C20 6.500 20 10 17.500 12C20 14 20 17.500 16 17.500C14 17.500 14 15 12 15S10 17.500 8 17.500C4 17.500 4 14 6.500 12C4 10 4 6.500 8 6.500z" stroke="#fff" strokeWidth="2.600" fill="none" /></svg>,
];

export default function App() {
  return (
    <Desktop>
      <Global />
      <Upper>
        <Wallpaper $w={9} $left />
        <RemoteWindow>
          <RemoteTitle>
            <RemoteIcon size={16} />
            <span>115.124.120.24:63389 - Remote Desktop Connection</span>
            <WindowGlyph $mr={34} width="11" height="11"><path d="M0 5.500h10" stroke="#000" /></WindowGlyph>
            <WindowGlyph $mr={35} width="11" height="11"><rect x=".5" y=".5" width="9" height="9" fill="none" stroke="#000" /></WindowGlyph>
            <WindowGlyph $mr={17} width="11" height="11"><path d="M.5.5l10 10M10.500.5l-10 10" stroke="#000" strokeWidth="1.100" /></WindowGlyph>
          </RemoteTitle>
          <RemoteBody>
            <Client>
              <AppTitle>
                <svg width="16" height="16">
                  <rect x=".5" y=".5" width="15" height="15" fill="#fff" stroke="#8c8c8c" />
                  {[[4, 5], [8, 4], [12, 3], [6, 8], [10, 7], [13, 7], [4, 11], [8, 10], [12, 11], [6, 13], [10, 13]].map(([x, y]) => (
                    <Plus key={`${x}${y}`} x={x} y={y} r={1.5} s="#1f5fae" />
                  ))}
                </svg>
                <span>Tableau - ctor_monthofyear</span>
                <CaptionButton $w={16} />
                <CaptionButton $w={2} />
              </AppTitle>
              <MenuBar>
                {menus.map(([m, w]) => <MenuItem key={m} $w={w}>{m}</MenuItem>)}
              </MenuBar>
              <AppToolbar />
              <Workspace>
                <Sidebar>
                  <PanelHead $h={17} $first>Dashboard
                    <svg width="7" height="9"><path d="M.5 3.500h6L3.500 0zM.5 5.500h6L3.500 9z" fill={c.slate} /></svg>
                  </PanelHead>
                  <SheetList><SheetRow><SheetIcon />Sheet 1</SheetRow></SheetList>
                  <ObjectArea>
                    <ObjectGrid>
                      {Object.entries(objectIcons).map(([name, icon], i) => (
                        <ObjectItem key={name} $right={i % 2 === 1}><svg width="15" height="13">{icon}</svg><span>{name}</span></ObjectItem>
                      ))}
                    </ObjectGrid>
                    <NewLabel>New objects:</NewLabel>
                    <ToggleRow><Toggle $on>Tiled</Toggle><Toggle>Floating</Toggle></ToggleRow>
                  </ObjectArea>
                  <PanelHead $h={20}>Layout</PanelHead>
                  <LayoutTree>
                    Dashboard
                    <TreeRow>
                      <svg width="16" height="14"><rect x="1.500" y="3.500" width="8" height="8" fill="none" stroke="#848284" /><path d="M3.500 7.500h4M5.500 5.500v4" stroke="#000" /><path d="M5.500 0v3M10 7.500h5" stroke="#848284" strokeDasharray="1 1" /></svg>
                      <svg width="16" height="13"><path d="M1.500.500h5v11h-5zM8.500.500h6v5h-6zM8.500 7.500h6v4h-6z" fill="#fff" stroke={c.line} /></svg>
                      <span>Tiled</span>
                    </TreeRow>
                  </LayoutTree>
                  <PanelHead $h={20}>Sheet 1</PanelHead>
                  <Props>
                    <PosRow label="Pos:" items={[["x", "0"], ["y", "0"]]} />
                    <PosRow label="Size:" items={[["w", "999"], ["h", "601"]]} />
                    <CheckRow>
                      <Check><svg width="10" height="10"><path d="M1.500 4l2.500 3 4.500-5.500" stroke="#000" strokeWidth="2" fill="none" /></svg></Check>
                      <CheckText $w={104} $ls={0.45}>Show Title</CheckText>
                      <Check />
                      <CheckText $w={60} $ls={-0.1}>Floating</CheckText>
                    </CheckRow>
                  </Props>
                </Sidebar>
                <Stage>
                  <SheetFrame>
                    <FrameGrip><Grip /><i /></FrameGrip>
                    <SheetTitle>Sheet 1</SheetTitle>
                    <ColumnTitle>Month</ColumnTitle>
                    <PlotRow>
                      <AxisTitle><span>Ctor</span></AxisTitle>
                      <AxisScale>
                        {ticks.map((t) => <Tick key={t}><span>{t}</span></Tick>)}
                        <Tick $zero><span>0</span></Tick>
                      </AxisScale>
                      <Plot>
                        {bars.map((b) => (
                          <BarCell key={b.m}>
                            {b.m}
                            <Bar $fill={b.fill} $hot={b.hot} style={{ width: b.w, height: b.h }} />
                          </BarCell>
                        ))}
                      </Plot>
                    </PlotRow>
                    <Categories>
                      {bars.map((b) => <Category key={b.m}>{b.m}</Category>)}
                    </Categories>
                  </SheetFrame>
                </Stage>
              </Workspace>
              <TabStrip>
                <TabPiece $w={131} $bg="#e7e7e7" $edge="#555" />
                <TabPiece $w={73} $bg="#f7f3f7" $edge="#bbb" />
                <TabPiece $w={102} $bg="#fff" $edge="#555" />
              </TabStrip>
              <Tooltip>
                <span>Month:</span><b>February</b>
                <span>Ctor:</span><b>23.53</b>
              </Tooltip>
              <Pointer width="18" height="22">
                <path d="M5.500 12V2.500q0-2 1.500-2t1.500 2V7q2.500-1 2.800.8 2-.6 2.500.8 2.200-.5 2.500 1.500v4l-1.800 4v2.500h-8V18L1.500 12.500q-.8-2 1-2 1.500 0 3 2z" fill="#fff" stroke="#000" />
                <path d="M8.500 7v4M11.300 8v3M13.800 9v3" stroke="#000" />
              </Pointer>
              <ShowMe>
                <ShowMeHead>
                  <svg width="15" height="15">
                    {[[0, 0], [0, 4], [0, 8], [4, 4], [4, 8], [8, 8], [0, 12], [4, 12], [8, 12], [12, 12]].map(([x, y]) => (
                      <rect key={`${x}-${y}`} x={x} y={y} width="2" height="2" fill="#b5b2b5" />
                    ))}
                  </svg>
                  <svg width="48" height="13"><R d={[[32, 3, 3, 8, "#bd8e00"], [36, 0, 3, 11, "#9c2c00"], [40, 2, 3, 9, "#21b221"], [44, 5, 3, 6, "#2130ff"], [31, 11, 17, 1, "#42596b"]]} /></svg>
                  <span>Show Me</span>
                </ShowMeHead>
                <ThumbGrid>
                  {thumbs.map((t, i) => (
                    <Thumb key={i} $dim={t.dim} $on={t.on}><svg width="40" height="26">{t.a}</svg></Thumb>
                  ))}
                </ThumbGrid>
                <Hint>
                  For <b>horizontal bars</b> try
                  <div>0 or more <Pill $bg="#deebff">dimensions</Pill></div>
                  <div>1 or more <Pill $bg="#d6f3de">measures</Pill></div>
                </Hint>
              </ShowMe>
            </Client>
            <VScroll>
              <ScrollEnd $h={17}><Chevron d="M1.500 7L5 3.500 8.500 7" /></ScrollEnd>
              <VThumb />
              <ScrollEnd $h={110} $toEnd><Chevron d="M1.500 3L5 6.500 8.500 3" /></ScrollEnd>
            </VScroll>
          </RemoteBody>
          <HScroll>
            <ScrollEnd $w={17} $h={15}><Chevron d="M6 1.500L2.500 5 6 8.500" /></ScrollEnd>
            <HThumb />
            <ScrollEnd $h={15} $w={48} $toRight><Chevron d="M3 1.500L6.500 5 3 8.500" /></ScrollEnd>
            <ScrollEnd $grow $h={15}>
              <svg width="9" height="9"><R f="#b5b5b5" d={[[6, 0, 2, 2], [3, 3, 2, 2], [6, 3, 2, 2], [0, 6, 2, 2], [3, 6, 2, 2], [6, 6, 2, 2]]} /></svg>
            </ScrollEnd>
          </HScroll>
        </RemoteWindow>
        <Wallpaper $w={7} />
      </Upper>
      <Taskbar>
        <Start><svg width="16" height="16"><path d="M0 2.300l6.500-1v6.200H0zM7.500 1.200L16 0v7.500H7.500zM0 8.500h6.500v6.200l-6.500-1zM7.500 8.500H16V16l-8.500-1.200z" fill="#fff" /></svg></Start>
        <Search>
          <svg width="22" height="22"><circle cx="11" cy="11" r="9.300" fill="none" stroke="#f2f2f2" strokeWidth="2.600" /></svg>
          <span>Type here to search</span>
          <svg width="12" height="17"><rect x="3.500" y=".5" width="5" height="10" rx="1" fill="none" stroke="#b5b5b5" /><path d="M.5 8v2.500q0 3 3 3h5q3 0 3-3V8M6 13.500V16M3 16.500h6" fill="none" stroke="#b5b5b5" /></svg>
        </Search>
        {taskIcons.map((icon, i) => (
          <Task key={i} $w={i ? 49 : 50} $pr={i ? 0 : 1} $on={i === 7}>{icon}</Task>
        ))}
        <Tray>
          <BatteryGauge>2:47</BatteryGauge>
          <BatteryNub />
          <TrayIcon $mr={12} width="12" height="7"><path d="M.7 6.300L6 1l5.300 5.300" stroke="#fff" strokeWidth="1.300" fill="none" /></TrayIcon>
          <TrayIcon $mr={7} width="14" height="13">
            <path d="M.7 12.500A11.500 11.500 0 0 1 12.500.8M4 12.500a8.500 8.500 0 0 1 8.500-8.300M7 12.500A5.500 5.500 0 0 1 12.500 7.300" stroke="#d5d5d5" strokeWidth="1.300" fill="none" /><circle cx="11" cy="11.300" r="1.500" fill="#fff" />
          </TrayIcon>
          <TrayIcon $mr={9} width="17" height="14">
            <path d="M.6 4.500h2.500L6.500 1.200v11.600L3.100 9.500H.6z" stroke="#fff" fill="none" /><path d="M8.500 4.500q1.500 2.500 0 5M10.800 3q2.500 4 0 8" stroke="#fff" fill="none" /><path d="M13.200 1.500q3 5.500 0 11" stroke="#777" fill="none" />
          </TrayIcon>
          <TrayIcon $mr={9} width="15" height="10"><path d="M.5.500h12v8H.5z" fill="none" stroke="#fff" /><R f="#fff" d={[[2, 2, 5, 5], [13, 3, 2, 3]]} /></TrayIcon>
          <Clock>5:21 PM<br />27-Jul-18</Clock>
          <TrayIcon $mr={0} width="17" height="17"><path d="M.6 .6h15.400v12h-5L8.300 15.500 5.600 12.600h-5z" stroke="#fff" strokeWidth="1.200" fill="none" /></TrayIcon>
        </Tray>
      </Taskbar>
      <Watermark>
        <div>Activate Windows</div>
        <div>Go to Settings to activate Windows.</div>
      </Watermark>
    </Desktop>
  );
}
